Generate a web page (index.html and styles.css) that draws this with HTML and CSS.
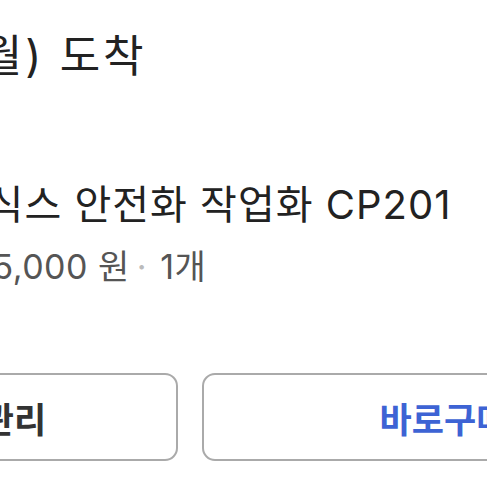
FILE: index.html
```html
<!DOCTYPE html>
<html lang="ko">
<head>
<meta charset="utf-8">
<link rel="stylesheet" href="styles.css">
</head>
<body>
<div class="viewport">
  <div class="arrival">3/15(월) 도착</div>
  <div class="product">
    <div class="name">제이식스 안전화 작업화 CP201</div>
    <div class="meta">45,000 원<span class="dot">·</span>1개</div>
  </div>
  <div class="actions">
    <button class="btn btn-ghost">교환·반품 관리</button>
    <button class="btn btn-primary">바로구매</button>
  </div>
</div>
</body>
</html>
```
FILE: styles.css
```css
html, body {
  margin: 0;
  padding: 0;
  background: #ffffff;
}
.viewport {
  width: 487px;
  height: 487px;
  overflow: hidden;
  font-family: Inter, "Noto Sans CJK KR", sans-serif;
}
.arrival {
  padding-top: 34px;
  margin-left: -137px;
  font-size: 44px;
  letter-spacing: 3px;
  line-height: 1;
  color: #222222;
  white-space: nowrap;
}
.product {
  padding-top: 107px;
}
.name {
  margin-left: -89px;
  font-size: 40px;
  letter-spacing: 1px;
  line-height: 1;
  color: #222222;
  white-space: nowrap;
}
.meta {
  margin-top: 25px;
  margin-left: -30px;
  font-size: 34px;
  letter-spacing: 0.5px;
  line-height: 1;
  color: #555555;
  white-space: nowrap;
}
.dot {
  color: #bbbbbb;
  margin: 0 13px 0 7px;
}
.actions {
  display: flex;
  gap: 24px;
  margin-top: 89px;
  margin-left: -290px;
}
.btn {
  flex: 0 0 468px;
  height: 88px;
  border: 2.5px solid #aaaaaa;
  border-radius: 13px;
  background: #ffffff;
  font-family: "Noto Sans CJK KR", sans-serif;
  font-size: 35px;
  font-weight: 700;
  padding: 0;
}
.btn-ghost {
  color: #333333;
  padding-right: 10px;
}
.btn-primary {
  color: #3d63d4;
  padding-left: 16px;
}
```
